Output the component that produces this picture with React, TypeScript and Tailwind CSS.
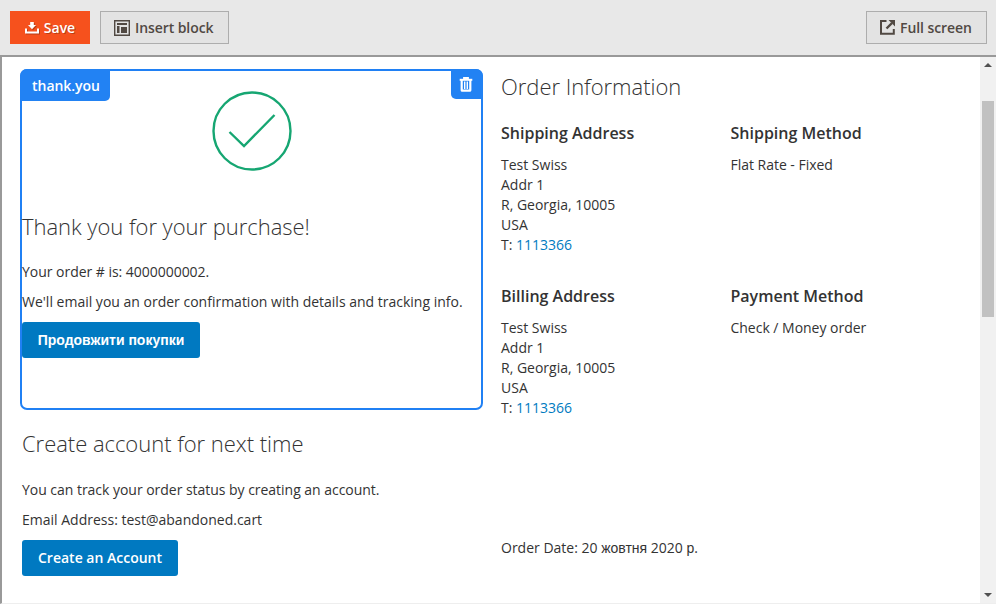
import type { ReactNode } from "react";

function SaveIcon() {
  return (
    <svg width="14" height="12" viewBox="0 0 14 12" fill="currentColor" className="shrink-0 drop-shadow-[1px_1px_0_rgba(0,0,0,0.25)]">
      <path d="M5.2 0h3.6v3H11L7 7.2 3 3h2.2z" />
      <path d="M0 6.5h2v3h10v-3h2V11.5H0z" />
    </svg>
  );
}

function BlockIcon() {
  return (
    <svg width="16" height="16" viewBox="0 0 16 16" className="shrink-0">
      <path d="M.7.7h14.6v14.6H.7z" fill="none" stroke="#514943" strokeWidth="1.4" />
      <path d="M3 3h10v2H3zM3 6h2.5v7H3zM7 7h6v6H7z" fill="#514943" />
    </svg>
  );
}

function FullScreenIcon() {
  return (
    <svg width="15" height="15" viewBox="0 0 15 15" className="shrink-0" fill="none" stroke="#514943">
      <path d="M6.5 1H1v12.8h12.8V9" strokeWidth="2" />
      <path d="M6.5 8.5 12 3" strokeWidth="2.4" />
      <path d="M8.5 0H15v6.5z" fill="#514943" stroke="none" />
    </svg>
  );
}

function TrashIcon() {
  return (
    <svg width="14" height="15" viewBox="0 0 14 15" fill="none" stroke="#fff">
      <path d="M.7 2.8h12.6" strokeWidth="2" />
      <path d="M5 2.2V1h4v1.2" strokeWidth="1.8" />
      <path d="M2.7 3v10.2q0 .5.5.5h7.6q.5 0 .5-.5V3" strokeWidth="2.2" />
      <path d="M5.7 4.5v7.5M8.3 4.5v7.5" strokeWidth="1.4" />
    </svg>
  );
}

function ToolButton({ children, className }: { children: ReactNode; className: string }) {
  return (
    <button className={`flex h-[33px] items-center justify-start gap-[5px] border border-[#adadad] bg-[#e3e3e3] pl-[13px] text-sm font-semibold tracking-[-0.08px] text-[#514943] ${className}`}>
      {children}
    </button>
  );
}

function Address({ title }: { title: string }) {
  return (
    <div className="w-[229.5px]">
      <h3 className="mb-[13px] text-base leading-[18px] font-semibold">{title}</h3>
      <p className="leading-5">
        Test Swiss<br />Addr 1<br />R, Georgia, 10005<br />USA<br />T: <a className="text-[#007bbf]">1113366</a>
      </p>
    </div>
  );
}

function Method({ title, value }: { title: string; value: string }) {
  return (
    <div>
      <h3 className="mb-[13px] text-base leading-[18px] font-semibold">{title}</h3>
      <p className="leading-5 tracking-[-0.02px]">{value}</p>
    </div>
  );
}

export default function App() {
  return (
    <div className="flex h-[604px] w-[996px] flex-col overflow-hidden bg-[#e8e8e8] font-['Open_Sans','Liberation_Sans',sans-serif] text-sm text-[#333]">
      <header className="flex h-[55px] shrink-0 items-start pt-[11px] pr-[9px] pl-[10px]">
        <button className="flex h-[33px] w-20 items-center justify-center gap-[5px] bg-[#f6511d] text-sm font-semibold text-white [text-shadow:1px_1px_0_rgba(0,0,0,0.25)]">
          <SaveIcon />Save
        </button>
        <ToolButton className="ml-[10px] w-[129px]"><BlockIcon />Insert block</ToolButton>
        <ToolButton className="ml-auto w-[121px]"><FullScreenIcon />Full screen</ToolButton>
      </header>
      <div className="flex h-[549px] border-t-2 border-b border-l-2 border-t-[#999] border-b-[#eee] border-l-[#999] bg-white">
        <main className="flex grow pt-3 pl-[18px]">
          <section className="w-[463px]">
            <div className="relative h-[341px] rounded-[7px] border-2 border-[#2080f4]">
              <span className="absolute -top-0.5 -left-0.5 flex h-8 w-[90px] items-center justify-center rounded-tl-[7px] rounded-br-[5px] bg-[#2282f3] pt-0.5 pl-0.5 font-semibold tracking-[-0.05px] text-white">thank.you</span>
              <span className="absolute -top-0.5 -right-0.5 flex h-[30px] w-8 items-center justify-center rounded-tr-[7px] rounded-bl-[5px] bg-[#2282f3] pr-0.5">
                <TrashIcon />
              </span>
              <svg width="80" height="80" viewBox="0 0 80 80" className="mt-5 ml-[190px]" fill="none" stroke="#16a672" strokeWidth="2.4">
                <circle cx="40" cy="40" r="38.5" />
                <path d="M17.5 41 32 55 62.5 24" />
              </svg>
              <h2 className="mt-[41px] text-[22px] leading-[28px] font-light tracking-[-0.03px]">Thank you for your purchase!</h2>
              <p className="mt-[22px] leading-5 tracking-[-0.03px]">Your order # is: 4000000002.</p>
              <p className="mt-[10px] leading-5">We'll email you an order confirmation with details and tracking info.</p>
              <button className="mt-[10px] h-9 w-[178px] rounded-[3px] bg-[#0079c1] font-['Liberation_Sans',sans-serif] font-bold text-white">Продовжити покупки</button>
            </div>
            <div className="pl-0.5">
              <h2 className="mt-[19px] text-[22px] leading-[28px] font-light tracking-[-0.03px]">Create account for next time</h2>
              <p className="mt-[23px] leading-5 tracking-[-0.03px]">You can track your order status by creating an account.</p>
              <p className="mt-[10px] leading-5">Email Address: test@abandoned.cart</p>
              <button className="mt-[10px] h-9 w-[156px] rounded-[3px] bg-[#0079c1] font-semibold text-white">Create an Account</button>
            </div>
          </section>
          <section className="ml-[18px] grow">
            <h2 className="mt-[3px] text-[22px] leading-[28px] font-light tracking-[-0.03px]">Order Information</h2>
            <div className="mt-6 flex">
              <Address title="Shipping Address" />
              <Method title="Shipping Method" value="Flat Rate - Fixed" />
            </div>
            <div className="mt-8 flex">
              <Address title="Billing Address" />
              <Method title="Payment Method" value="Check / Money order" />
            </div>
            <p className="mt-[120px] leading-5">Order Date: 20 <span className="font-['Liberation_Sans',sans-serif]">жовтня</span> 2020 <span className="font-['Liberation_Sans',sans-serif]">р</span>.</p>
          </section>
        </main>
        <div className="flex w-4 shrink-0 flex-col items-center bg-[#f1f1f1]">
          <svg width="8" height="4" viewBox="0 0 8 4" className="mt-[6px]"><path d="M4 0 8 4H0z" fill="#505050" /></svg>
          <div className="mt-[34px] h-[216px] w-3 bg-[#c1c1c1]" />
          <svg width="8" height="4" viewBox="0 0 8 4" className="mt-auto mb-[6px]"><path d="M0 0h8L4 4z" fill="#505050" /></svg>
        </div>
      </div>
    </div>
  );
}
